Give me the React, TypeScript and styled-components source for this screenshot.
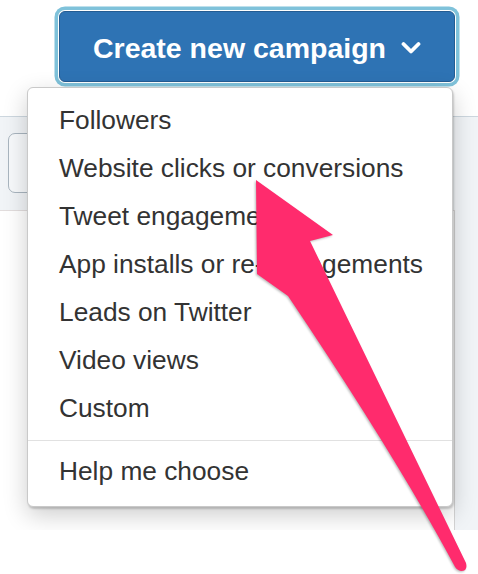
import React from "react";
import styled, { createGlobalStyle } from "styled-components";

const GlobalStyle = createGlobalStyle`
  html, body {
    margin: 0;
    padding: 0;
    background: #ffffff;
  }
  body {
    font-family: "Liberation Sans", Arial, Helvetica, sans-serif;
  }
  * { box-sizing: border-box; }
`;

const Root = styled.div`
  position: relative;
  width: 478px;
  height: 574px;
  overflow: hidden;
  background: #ffffff;
`;

const Page = styled.div`
  position: relative;
  width: 478px;
  height: 530px;
  overflow: hidden;
  display: flex;
  flex-direction: column;
`;

const Header = styled.header`
  height: 117px;
  flex: none;
  background: #ffffff;
  border-bottom: 1px solid #cdd7df;
  padding: 11px 0 0 59px;
  display: flex;
  align-items: flex-start;
`;

const CampaignButton = styled.button`
  width: 396px;
  height: 71px;
  border: 1px solid #245c92;
  border-radius: 6px;
  background: #2e73b4;
  color: #ffffff;
  font-family: "Liberation Sans", Arial, Helvetica, sans-serif;
  font-weight: 700;
  font-size: 28.5px;
  display: flex;
  align-items: center;
  justify-content: center;
  gap: 15px;
  padding: 3px 0 0 0;
  box-shadow: 0 0 0 1px #ffffff, 0 0 0 4.5px #7fc2da;
  cursor: pointer;
`;

const Chevron = styled.svg`
  width: 20px;
  height: 14px;
  flex: none;
  margin-top: -1px;
`;

const Content = styled.main`
  flex: 1;
  background: #f1f4f7;
  display: flex;
  flex-direction: column;
`;

const Toolbar = styled.div`
  height: 93px;
  flex: none;
  padding: 16px 0 0 8px;
`;

const SearchBox = styled.div`
  width: 220px;
  height: 60px;
  border: 1px solid #a9b5bf;
  border-radius: 7px;
  background: #f7f9fb;
`;

const Card = styled.section`
  flex: 1;
  width: 465px;
  margin-left: -10px;
  background: #ffffff;
  border-top: 1px solid #e2dddd;
  border-right: 1px solid #d4d4d4;
`;

const Menu = styled.ul`
  position: absolute;
  left: 27px;
  top: 87px;
  width: 426px;
  height: 420px;
  margin: 0;
  padding: 8px 0 0 0;
  list-style: none;
  background: #ffffff;
  border: 1px solid #c9c9c9;
  border-radius: 6px;
  box-shadow: 1px 2px 2px rgba(0, 0, 0, 0.18), 0 8px 24px rgba(0, 0, 0, 0.2);
`;

const MenuItem = styled.li`
  height: 48px;
  line-height: 48px;
  padding-left: 31px;
  font-size: 26.3px;
  color: #333333;
  white-space: nowrap;
`;

const Divider = styled.li`
  height: 1px;
  margin: 8px 0 6px;
  background: #e1e1e1;
`;

const Arrow = styled.svg`
  position: absolute;
  left: 0;
  top: 0;
  width: 478px;
  height: 574px;
  pointer-events: none;
  filter: drop-shadow(-1px 1px 1px rgba(0, 0, 0, 0.28));
`;

const items = [
  "Followers",
  "Website clicks or conversions",
  "Tweet engagements",
  "App installs or re-engagements",
  "Leads on Twitter",
  "Video views",
  "Custom",
];

export default function App() {
  return (
    <Root>
      <GlobalStyle />
      <Page>
        <Header>
          <CampaignButton>
            <span>Create new campaign</span>
            <Chevron viewBox="0 0 20 14">
              <polyline
                points="2.5,3 10,10.5 17.5,3"
                fill="none"
                stroke="#ffffff"
                strokeWidth="3.8"
                strokeLinecap="round"
                strokeLinejoin="round"
              />
            </Chevron>
          </CampaignButton>
        </Header>
        <Content>
          <Toolbar>
            <SearchBox />
          </Toolbar>
          <Card />
        </Content>
        <Menu>
          {items.map((t) => (
            <MenuItem key={t}>{t}</MenuItem>
          ))}
          <Divider />
          <MenuItem>Help me choose</MenuItem>
        </Menu>
      </Page>
      <Arrow viewBox="0 0 478 574">
        <path
          d="M256,180 L333,235 L310,241 L466,563 Q468,571 461,571 Q456,570 454,565 Q395,455 288,296 L257,274 Z"
          fill="#ff2b6d"
        />
      </Arrow>
    </Root>
  );
}
